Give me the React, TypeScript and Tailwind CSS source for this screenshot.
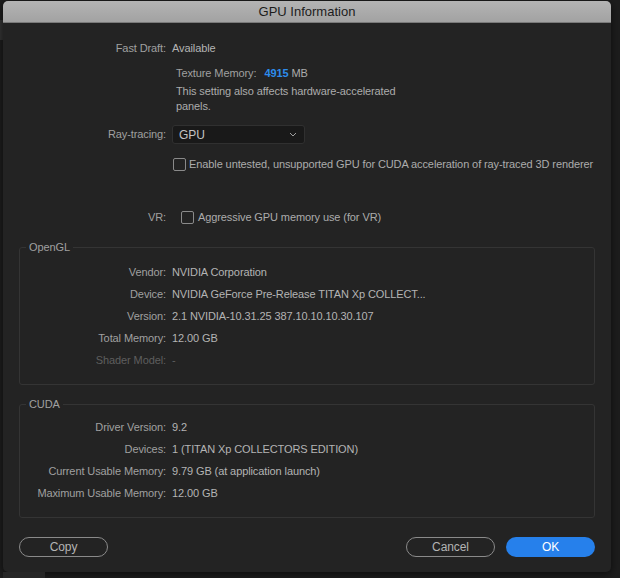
import React from 'react';

const FONT = { fontFamily: '"Liberation Sans", Arial, sans-serif' };

const openGlRows: { label: string; value: string; dim?: boolean }[] = [
  { label: 'Vendor:', value: 'NVIDIA Corporation' },
  { label: 'Device:', value: 'NVIDIA GeForce Pre-Release TITAN Xp COLLECT...' },
  { label: 'Version:', value: '2.1 NVIDIA-10.31.25 387.10.10.10.30.107' },
  { label: 'Total Memory:', value: '12.00 GB' },
  { label: 'Shader Model:', value: '-', dim: true },
];

const cudaRows: { label: string; value: string }[] = [
  { label: 'Driver Version:', value: '9.2' },
  { label: 'Devices:', value: '1 (TITAN Xp COLLECTORS EDITION)' },
  { label: 'Current Usable Memory:', value: '9.79 GB (at application launch)' },
  { label: 'Maximum Usable Memory:', value: '12.00 GB' },
];

const Checkbox = () => (
  <span className="block w-[13px] h-[13px] shrink-0 rounded-[2px] border-[1.5px] border-[#8a8a8a]" />
);

const InfoRow = ({ label, value, dim }: { label: string; value: string; dim?: boolean }) => (
  <div className="flex items-center h-[22px]">
    <span
      className={`w-[146px] shrink-0 text-right ${dim ? 'text-[#5e5e5e]' : 'text-[#a0a0a0]'}`}
    >
      {label}
    </span>
    <span className={`ml-[6px] ${dim ? 'text-[#5e5e5e]' : 'text-[#b4b4b4]'}`}>{value}</span>
  </div>
);

const Group = ({
  title,
  className,
  children,
}: {
  title: string;
  className: string;
  children: React.ReactNode;
}) => (
  <fieldset className={`border border-[#343434] rounded-[3px] ${className}`}>
    <legend className="ml-[6px] px-[3px] leading-[14px] text-[#a0a0a0]">{title}</legend>
    {children}
  </fieldset>
);

const App = () => {
  return (
    <div className="w-[620px] h-[578px] bg-[#1d1d1d] relative overflow-hidden" style={FONT}>
      <div className="flex h-full">
        <div className="w-[3px] shrink-0 flex flex-col">
          <div className="h-[20px]" />
          <div className="h-[20px] bg-[#343434]" />
        </div>
        <div className="flex flex-col">
          <div className="mt-[1px] w-[608px] h-[571px] rounded-[5px] bg-[#232323] shadow-[0_2px_8px_rgba(0,0,0,0.6)] flex flex-col overflow-hidden text-[11px] tracking-[-0.1px]">
            {/* title bar */}
            <div className="h-[22px] shrink-0 flex items-center justify-center bg-gradient-to-b from-[#b4b4b4] to-[#a2a2a2] border-b border-[#7a7a7a]">
              <span className="text-[13px] tracking-normal text-[#1c1c1c]">GPU Information</span>
            </div>

            <div className="flex flex-col px-[16px]">
              {/* fast draft */}
              <div className="flex items-center h-[22px] mt-[14px]">
                <span className="w-[147px] shrink-0 text-right text-[#a0a0a0]">Fast Draft:</span>
                <span className="ml-[6px] text-[#b4b4b4]">Available</span>
              </div>

              <div className="ml-[157px] flex flex-col">
                <div className="flex items-center h-[18px] mt-[5px]">
                  <span className="text-[#a0a0a0]">Texture Memory:</span>
                  <span className="ml-[8px] font-bold text-[#2d8ceb]">4915</span>
                  <span className="ml-[3px] text-[#acacac]">MB</span>
                </div>
                <p className="mt-[2px] w-[240px] leading-[15px] text-[#acacac]">
                  This setting also affects hardware-accelerated panels.
                </p>
              </div>

              {/* ray tracing */}
              <div className="flex items-center h-[19px] mt-[11px]">
                <span className="w-[147px] shrink-0 text-right text-[#a0a0a0]">Ray-tracing:</span>
                <div className="ml-[6px] w-[133px] h-[19px] flex items-center justify-between pl-[6px] pr-[7px] rounded-[3px] bg-[#191919] border border-[#303030]">
                  <span className="text-[12px] text-[#c4c4c4]">GPU</span>
                  <svg width="8" height="5" viewBox="0 0 8 5" fill="none">
                    <path d="M1 1l3 3 3-3" stroke="#a0a0a0" strokeWidth="1" />
                  </svg>
                </div>
              </div>

              <div className="flex items-center h-[14px] mt-[13px] ml-[154px] gap-[3px]">
                <Checkbox />
                <span className="text-[#acacac] whitespace-nowrap">
                  Enable untested, unsupported GPU for CUDA acceleration of ray-traced 3D renderer
                </span>
              </div>

              {/* VR */}
              <div className="flex items-center h-[14px] mt-[39px]">
                <span className="w-[147px] shrink-0 text-right text-[#a0a0a0]">VR:</span>
                <span className="ml-[15px] flex items-center gap-[4px]">
                  <Checkbox />
                  <span className="text-[#acacac]">Aggressive GPU memory use (for VR)</span>
                </span>
              </div>

              <Group title="OpenGL" className="mt-[16px] pt-[7px] pb-[13px]">
                {openGlRows.map((row) => (
                  <InfoRow key={row.label} {...row} />
                ))}
              </Group>

              <Group title="CUDA" className="mt-[12px] pt-[5px] pb-[13px]">
                {cudaRows.map((row) => (
                  <InfoRow key={row.label} {...row} />
                ))}
              </Group>

              {/* buttons */}
              <div className="flex items-center mt-[19px]">
                <button className="w-[89px] h-[20px] rounded-full border-[1.5px] border-[#8a8a8a] text-[12px] text-[#b4b4b4]">
                  Copy
                </button>
                <button className="ml-auto w-[89px] h-[20px] rounded-full border-[1.5px] border-[#8a8a8a] text-[12px] text-[#b4b4b4]">
                  Cancel
                </button>
                <button className="ml-[11px] w-[89px] h-[20px] rounded-full bg-[#2680eb] text-[12px] text-white">
                  OK
                </button>
              </div>
            </div>
          </div>
          <div className="flex-1 flex">
            <div className="w-[42px] bg-[#262626]" />
          </div>
        </div>
      </div>
    </div>
  );
};

export default App;
